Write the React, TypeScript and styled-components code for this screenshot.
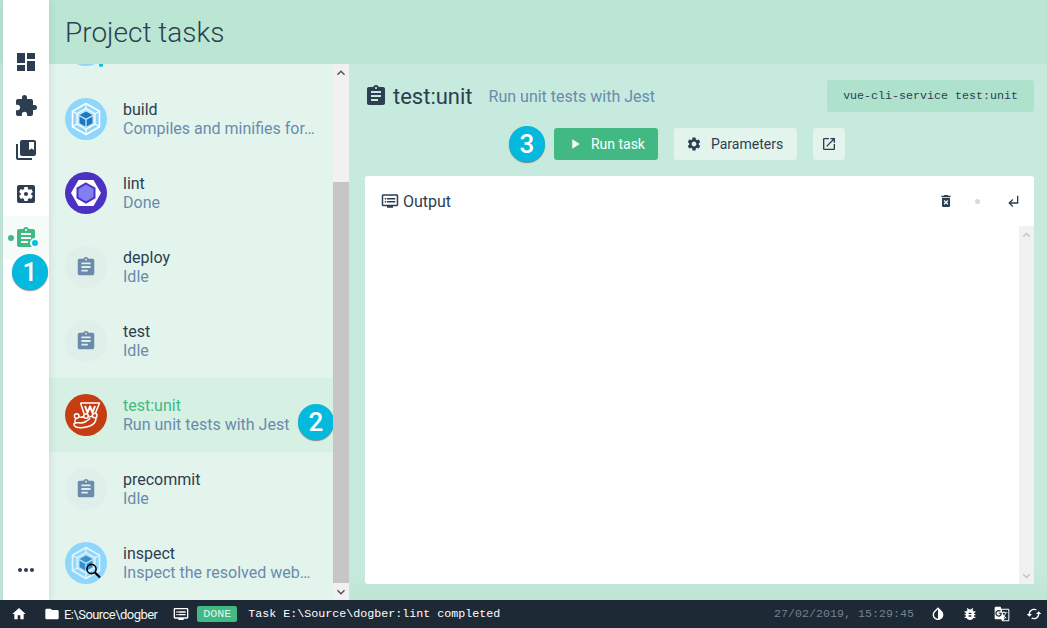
import React from "react";
import styled, { createGlobalStyle } from "styled-components";
import {
  MdDashboard, MdExtension, MdCollectionsBookmark, MdSettingsApplications, MdAssignment,
  MdMoreHoriz, MdHome, MdFolder, MdDvr, MdInvertColors, MdBugReport, MdGTranslate, MdCached,
  MdPlayArrow, MdSettings, MdOpenInNew, MdDeleteForever, MdSubdirectoryArrowLeft, MdKeyboardArrowUp, MdKeyboardArrowDown,
} from "react-icons/md";

const Global = createGlobalStyle`
  html, body { margin: 0; padding: 0; height: 100%; overflow: hidden; }
  body { font-family: Roboto, "Liberation Sans", sans-serif; color: #2c3e50; }
  #root { height: 100%; }
`;

const Page = styled.div`
  width: 1047px; height: 628px; display: flex; flex-direction: column; overflow: hidden;
`;
const Main = styled.div`
  flex: 1; min-height: 0; display: flex;
`;
const EdgeStrip = styled.div`
  width: 3px; background: linear-gradient(#bbe6d4 0 63px, #c8ebdd 63px);
`;
const Sidebar = styled.nav`
  width: 46px; padding: 40px 0 8px; box-sizing: border-box; background: #fff; display: flex;
  flex-direction: column; position: relative; z-index: 2; box-shadow: 0 0 8px rgba(44, 62, 80, .14);
`;
const NavItem = styled.div<{ $active?: boolean }>`
  height: 44px; display: flex; align-items: center; justify-content: center; position: relative;
  color: ${p => (p.$active ? "#42b983" : "#2c3e50")};
  background: ${p => (p.$active ? "#f5fbf8" : "transparent")};
  font-size: 24px;
`;
const NavSpacer = styled.div` flex: 1; `;
const ActiveDot = styled.span`
  position: absolute; left: 5px; top: 19px; width: 6px; height: 6px; border-radius: 50%; background: #42b983;
`;
const RunDot = styled.span`
  position: absolute; left: 27px; top: 22px; width: 6px; height: 6px; border-radius: 50%;
  background: #03c2e6; border: 2px solid #f5fbf8;
`;
const Badge = styled.div`
  width: 36px; height: 36px; border-radius: 50%; background: #03b9dd; color: #fff; flex: none;
  display: flex; align-items: center; justify-content: center; font-size: 26px; font-weight: 500;
  font-family: Roboto, "Liberation Sans", sans-serif;
  box-shadow: 0 1px 1px rgba(0, 0, 0, .45);
`;
const SideBadge = styled(Badge)`
  position: absolute; left: 9px; top: 38px; z-index: 3;
`;
const Content = styled.div`
  flex: 1; min-width: 0; display: flex; flex-direction: column;
  background: linear-gradient(#c6eadd 0 calc(100% - 30px), #bfe5d6);
`;
const TopBar = styled.header`
  height: 64px; flex: none; background: #bbe6d4; display: flex; align-items: center; padding-left: 16px;
`;
const PageTitle = styled.h1`
  margin: 2px 0 0; font-size: 28px; font-weight: 300; color: #2c3e50; line-height: 1;
`;
const Columns = styled.div`
  flex: 1; min-height: 0; display: flex;
`;
const ListPane = styled.div`
  width: 300px; display: flex; flex: none;
`;
const List = styled.div`
  width: 284px; background: #e3f4ed; overflow: hidden; flex: none;
`;
const ListScroll = styled.div`
  margin-top: -56px;
`;
const Row = styled.div<{ $selected?: boolean }>`
  height: 74px; padding: 0 16px; box-sizing: border-box; display: flex; align-items: center; gap: 16px;
  position: relative; background: ${p => (p.$selected ? "#d6f0e4" : "transparent")};
`;
const IconCircle = styled.div<{ $bg: string }>`
  width: 42px; height: 42px; border-radius: 50%; background: ${p => p.$bg}; flex: none;
  display: flex; align-items: center; justify-content: center; overflow: hidden; color: #6a8bad; font-size: 22px;
`;
const RowText = styled.div`
  min-width: 0; flex: 1; font-size: 16px; line-height: 19px;
`;
const RowName = styled.div<{ $selected?: boolean }>`
  color: ${p => (p.$selected ? "#42b983" : "#2c3e50")};
`;
const RowDesc = styled.div`
  color: #6a8bad; white-space: nowrap;
`;
const RowBadge = styled(Badge)`
  position: absolute; left: 249px; top: 26px; z-index: 3;
`;
const SpeckDot = styled.span`
  position: absolute; left: 50px; top: 55px; width: 4px; height: 4px; border-radius: 50%; background: #03c2e6;
`;
const Scrollbar = styled.div<{ $light?: boolean }>`
  width: ${p => (p.$light ? 15 : 16)}px; flex: none; display: flex; flex-direction: column; align-self: stretch;
  background: #f1f1f1;
  color: ${p => (p.$light ? "#c1c1c1" : "#505050")}; font-size: 16px;
`;
const ScrollBtn = styled.div`
  height: 17px; flex: none; display: flex; align-items: center; justify-content: center;
`;
const ScrollSpace = styled.div<{ $size: number }>`
  flex: ${p => p.$size} 0 0;
`;
const ScrollThumb = styled.div<{ $size: number }>`
  flex: ${p => p.$size} 0 0; background: #c6c6c6;
`;
const Details = styled.section`
  flex: 1; min-width: 0; padding: 16px 13px 16px 16px; display: flex; flex-direction: column;
`;
const DetailHead = styled.div`
  height: 32px; display: flex; align-items: center;
`;
const HeadIcon = styled.span`
  font-size: 24px; display: flex; margin-left: -1px; color: #2c3e50;
`;
const HeadTitle = styled.h2`
  margin: 0 0 0 5px; font-size: 22px; font-weight: 400; color: #2c3e50;
`;
const HeadDesc = styled.span`
  margin-left: 16px; font-size: 16px; color: #6a8bad;
`;
const CommandChip = styled.code`
  margin-left: auto; height: 32px; padding: 0 16px; border-radius: 3px; background: #aee2cc; color: #2c3e50;
  display: flex; align-items: center; font: 11.67px "Liberation Mono", monospace; box-sizing: border-box;
`;
const Actions = styled.div`
  margin-top: 16px; height: 32px; display: flex; align-items: center; justify-content: center; gap: 16px;
`;
const Button = styled.button<{ $primary?: boolean }>`
  height: 32px; padding: 0 14px 0 12px; border: 0; border-radius: 3px; display: flex; align-items: center; gap: 9px;
  font: 14px Roboto, sans-serif; cursor: pointer; position: relative;
  background: ${p => (p.$primary ? "#42b983" : "#e3f4ed")};
  color: ${p => (p.$primary ? "#fff" : "#2c3e50")};
  svg { font-size: 16px; flex: none; }
`;
const RunButton = styled(Button)`
  padding: 0 13px; gap: 8px;
`;
const IconButton = styled(Button)`
  width: 32px; padding: 0; justify-content: center;
`;
const ButtonBadge = styled(Badge)`
  position: absolute; left: -45px; top: -2px;
`;
const OutputPanel = styled.div`
  margin-top: 16px; flex: 1; min-height: 0; background: #fff; border-radius: 3px; display: flex; flex-direction: column;
`;
const OutputHead = styled.div`
  height: 50px; flex: none; padding: 0 13px 0 16px; display: flex; align-items: center; font-size: 16px; color: #2c3e50;
  svg { flex: none; }
`;
const OutputLabel = styled.span`
  margin-left: 4px;
`;
const OutputTools = styled.div`
  margin-left: auto; display: flex; align-items: center; gap: 15px;
`;
const ToolBtn = styled.div<{ $wide?: boolean }>`
  width: 16px; height: 16px; display: flex; align-items: center; justify-content: center; font-size: 16px;
  margin-left: ${p => (p.$wide ? 5 : 0)}px;
`;
const ToolDot = styled.span`
  width: 5px; height: 5px; border-radius: 50%; background: #d5dae0;
`;
const OutputBody = styled.div`
  flex: 1; min-height: 0; display: flex; justify-content: flex-end;
`;
const StatusBar = styled.footer`
  height: 28px; flex: none; background: #1d2935; color: #e3f4ed; display: flex; align-items: center; padding: 0 5px 0 11px;
  font-size: 13px; position: relative; z-index: 4;
  svg { flex: none; font-size: 16px; color: #fff; }
`;
const Folder = styled.div`
  margin-left: 17px; display: flex; align-items: center; gap: 4px; letter-spacing: -0.55px; color: #f0f6f4;
`;
const LogIcon = styled.div`
  margin-left: 16px; display: flex;
`;
const DoneChip = styled.span`
  margin-left: 8px; width: 40px; height: 16px; border-radius: 2px; background: #42b983; color: #e3f4ed;
  display: flex; align-items: center; justify-content: center; font: 11.67px "Liberation Mono", monospace;
`;
const LogText = styled.span`
  margin-left: 11px; font: 11.67px "Liberation Mono", monospace; color: #fff; white-space: pre;
`;
const Clock = styled.span`
  margin-left: auto; font: 11.67px "Liberation Mono", monospace; color: #75828f; white-space: pre;
`;
const StatusTools = styled.div`
  margin-left: 16px; display: flex; align-items: center; gap: 16px;
`;

const Webpack = ({ search }: { search?: boolean }) => (
  <svg width="42" height="42" viewBox="0 0 42 42" aria-hidden="true">
    <g opacity={search ? 0.75 : 1}>
      <path d="M21 5.500 34.500 13.200v15.600L21 36.500 7.500 28.800V13.200Z" fill="none" stroke="#fff" strokeWidth="1.600" />
      <path d="M21 5.500v6M34.500 13.200l-5.500 3.200M34.500 28.800l-5.500-3.200M21 36.500v-6M7.500 28.800l5.500-3.200M7.500 13.200l5.500 3.200" stroke="#fff" strokeWidth="1.200" />
      <path d="M21 10.500 30 15.600v10.600L21 31.400 12 26.200V15.600Z" fill="#bfe6fb" stroke="#fff" strokeWidth="1.200" />
      <path d="M21 13.500 27.500 17 21 20.600 14.500 17Z" fill="#1c78c0" />
      <path d="M14.500 18.500 20.300 21.800V28.500L14.500 25.200Z" fill="#1c78c0" />
      <path d="M27.500 18.500 21.700 21.800V28.500L27.500 25.200Z" fill="#1c78c0" />
    </g>
    {search && (
      <g fill="none" stroke="#000">
        <circle cx="26.500" cy="27" r="4.600" strokeWidth="1.600" />
        <path d="M30 30.500 35 35.500" strokeWidth="2.200" />
      </g>
    )}
  </svg>
);

const Eslint = () => (
  <svg width="42" height="42" viewBox="0 0 42 42" aria-hidden="true">
    <path d="M13.500 8h15L36 21l-7.500 13h-15L6 21Z" fill="#fff" />
    <path d="M21 11.500 29.500 16.300v9.400L21 30.500l-8.500-4.800v-9.400Z" fill="#8080f2" stroke="#4b32c3" strokeWidth="2" />
  </svg>
);

const Jest = () => (
  <svg width="42" height="42" viewBox="0 0 42 42" aria-hidden="true" fill="none" stroke="#fff" strokeWidth="1.500" strokeLinejoin="round">
    <path d="M15.500 9H34.500L30.500 19M15.500 9 19 19.500" />
    <path d="M20 12 22.500 18.500 25 12.500 27.500 18.500 30 12" strokeWidth="2" />
    <circle cx="11.700" cy="22" r="2.300" />
    <circle cx="21" cy="22" r="2.300" />
    <circle cx="29.700" cy="21.500" r="2.300" />
    <path d="M14 22.500c1.500 1 3 1 4.700 0M23.300 22.300c1.500.6 2.500.5 4-.2" />
    <path d="M31 24c0 3-2 6-5 7.500-4 2-11 3-15 1.500-2-1-3-3-1-4 3-1 6 1 10-1 2-1 4-2 5-4M11 24.500c-1.500 1.500-1.500 3-1 4.500" />
  </svg>
);

type Task = { name?: string; desc?: string; icon: React.ReactNode; bg: string; selected?: boolean };
const idleIcon = <MdAssignment />;
const tasks: Task[] = [
  { icon: <Webpack />, bg: "#8ed6fb" },
  { name: "build", desc: "Compiles and minifies for…", icon: <Webpack />, bg: "#8ed6fb" },
  { name: "lint", desc: "Done", icon: <Eslint />, bg: "#4b32c3" },
  { name: "deploy", desc: "Idle", icon: idleIcon, bg: "#e0efea" },
  { name: "test", desc: "Idle", icon: idleIcon, bg: "#e0efea" },
  { name: "test:unit", desc: "Run unit tests with Jest", icon: <Jest />, bg: "#c63d14", selected: true },
  { name: "precommit", desc: "Idle", icon: idleIcon, bg: "#e0efea" },
  { name: "inspect", desc: "Inspect the resolved web…", icon: <Webpack search />, bg: "#8ed6fb" },
];

export default function App() {
  return (
    <Page>
      <Global />
      <Main>
        <EdgeStrip />
        <Sidebar>
          <NavItem><MdDashboard /></NavItem>
          <NavItem><MdExtension /></NavItem>
          <NavItem><MdCollectionsBookmark /></NavItem>
          <NavItem><MdSettingsApplications /></NavItem>
          <NavItem $active>
            <ActiveDot />
            <MdAssignment />
            <RunDot />
            <SideBadge>1</SideBadge>
          </NavItem>
          <NavSpacer />
          <NavItem><MdMoreHoriz /></NavItem>
        </Sidebar>
        <Content>
          <TopBar><PageTitle>Project tasks</PageTitle></TopBar>
          <Columns>
            <ListPane>
              <List>
                <ListScroll>
                  {tasks.map((t, i) => (
                    <Row key={i} $selected={t.selected}>
                      <IconCircle $bg={t.bg}>{t.icon}</IconCircle>
                      {t.name && (
                        <RowText>
                          <RowName $selected={t.selected}>{t.name}</RowName>
                          <RowDesc>{t.desc}</RowDesc>
                        </RowText>
                      )}
                      {i === 0 && <SpeckDot />}
                      {t.selected && <RowBadge>2</RowBadge>}
                    </Row>
                  ))}
                </ListScroll>
              </List>
              <Scrollbar>
                <ScrollBtn><MdKeyboardArrowUp /></ScrollBtn>
                <ScrollSpace $size={101} />
                <ScrollThumb $size={400} />
                <ScrollBtn><MdKeyboardArrowDown /></ScrollBtn>
              </Scrollbar>
            </ListPane>
            <Details>
              <DetailHead>
                <HeadIcon><MdAssignment /></HeadIcon>
                <HeadTitle>test:unit</HeadTitle>
                <HeadDesc>Run unit tests with Jest</HeadDesc>
                <CommandChip>vue-cli-service test:unit</CommandChip>
              </DetailHead>
              <Actions>
                <RunButton $primary>
                  <ButtonBadge>3</ButtonBadge>
                  <MdPlayArrow />Run task
                </RunButton>
                <Button><MdSettings />Parameters</Button>
                <IconButton aria-label="Open in new"><MdOpenInNew /></IconButton>
              </Actions>
              <OutputPanel>
                <OutputHead>
                  <MdDvr size={18} />
                  <OutputLabel>Output</OutputLabel>
                  <OutputTools>
                    <ToolBtn><MdDeleteForever /></ToolBtn>
                    <ToolBtn><ToolDot /></ToolBtn>
                    <ToolBtn $wide><MdSubdirectoryArrowLeft /></ToolBtn>
                  </OutputTools>
                </OutputHead>
                <OutputBody>
                  <Scrollbar $light>
                    <ScrollBtn><MdKeyboardArrowUp /></ScrollBtn>
                    <ScrollSpace $size={1} />
                    <ScrollBtn><MdKeyboardArrowDown /></ScrollBtn>
                  </Scrollbar>
                </OutputBody>
              </OutputPanel>
            </Details>
          </Columns>
        </Content>
      </Main>
      <StatusBar>
        <MdHome />
        <Folder><MdFolder />E:\Source\dogber</Folder>
        <LogIcon><MdDvr /></LogIcon>
        <DoneChip>DONE</DoneChip>
        <LogText>Task E:\Source\dogber:lint completed</LogText>
        <Clock>27/02/2019, 15:29:45</Clock>
        <StatusTools>
          <MdInvertColors />
          <MdBugReport />
          <MdGTranslate />
          <MdCached />
        </StatusTools>
      </StatusBar>
    </Page>
  );
}
